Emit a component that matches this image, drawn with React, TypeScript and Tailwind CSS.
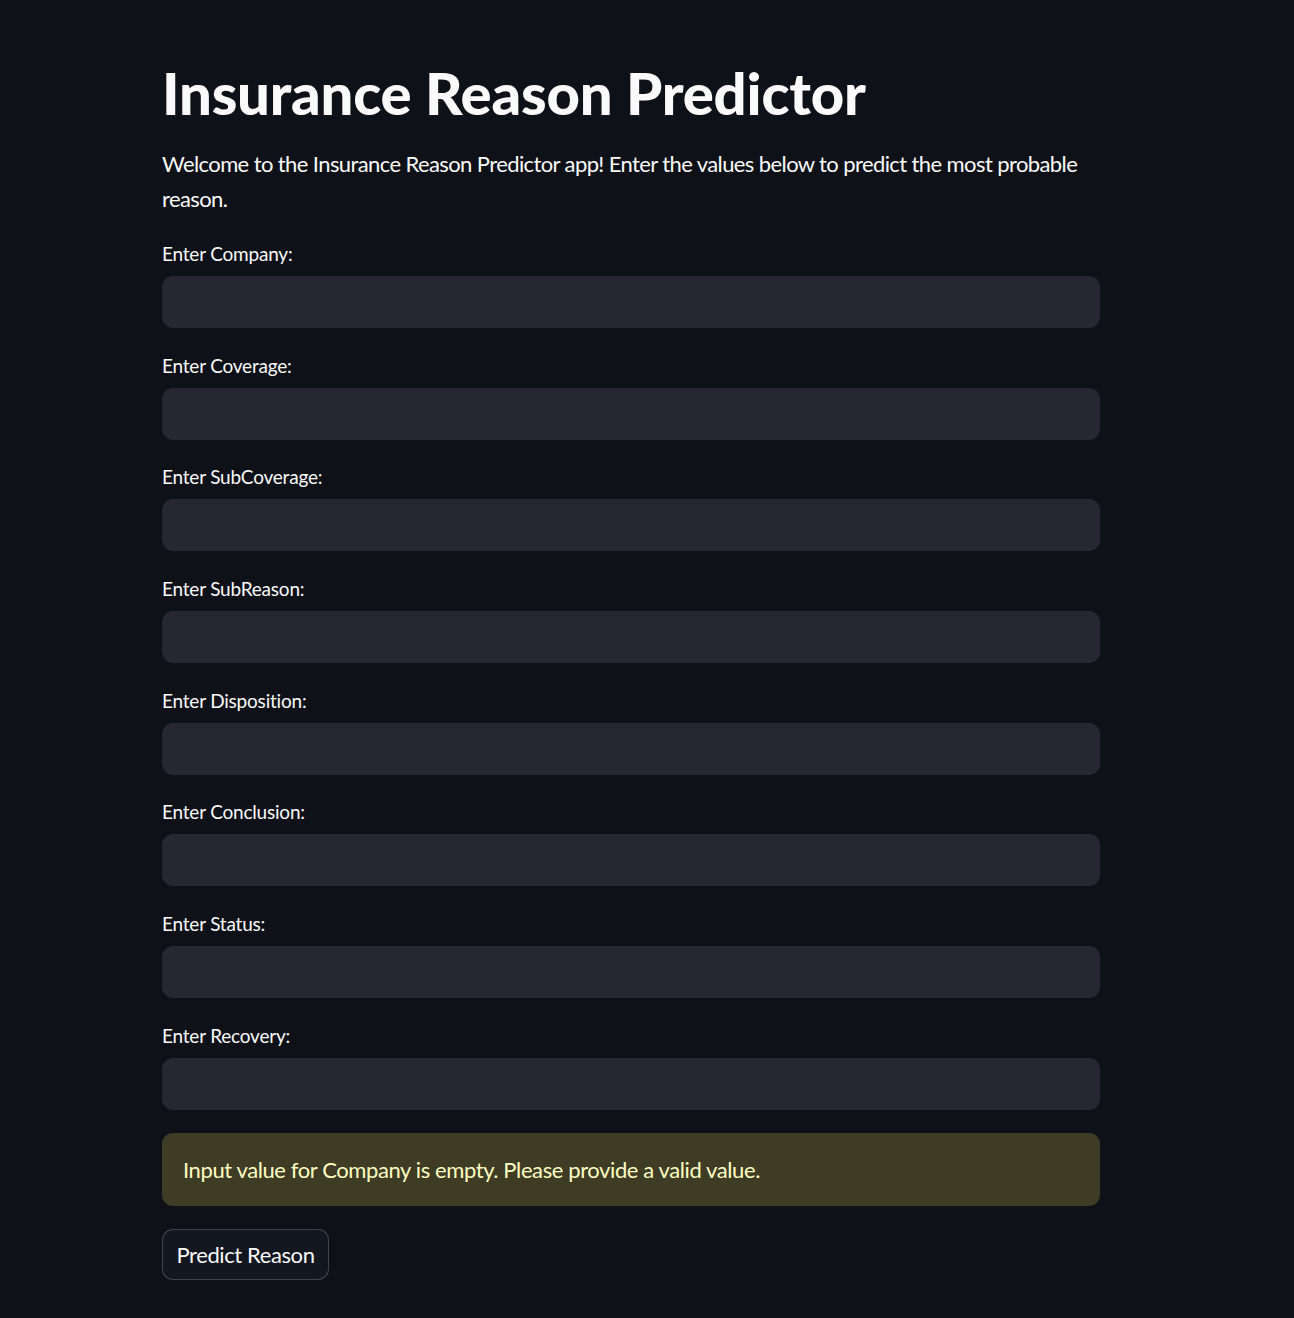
import React from "react";

const fields = [
  "Enter Company:",
  "Enter Coverage:",
  "Enter SubCoverage:",
  "Enter SubReason:",
  "Enter Disposition:",
  "Enter Conclusion:",
  "Enter Status:",
  "Enter Recovery:",
];

export default function App() {
  return (
    <div
      className="min-h-[1318px] w-full bg-[#0e1117] text-[#fafafa]"
      style={{ fontFamily: "Lato, 'Noto Sans', sans-serif" }}
    >
      <div className="ml-[162px] w-[938px] pt-[57px]">
        <h1 className="text-[58px] font-black leading-[72px] tracking-[-0.2px]">
          Insurance Reason Predictor
        </h1>
        <p className="mt-[17px] text-[22px] leading-[35px] tracking-[-0.6px]">
          Welcome to the Insurance Reason Predictor app! Enter the values below to predict the most probable
          <br />
          reason.
        </p>
        <div className="mt-[25px] flex flex-col gap-[24.7px]">
          {fields.map((f) => (
            <div key={f} className="flex flex-col">
              <label className="text-[19px] leading-[26px] tracking-[-0.2px]">{f}</label>
              <div className="mt-[9px] h-[52px] rounded-[11px] bg-[#262730]" />
            </div>
          ))}
        </div>
        <div className="mt-[23px] flex h-[73px] items-center rounded-[11px] bg-[#3e3c24] px-[21px] text-[22px] tracking-[-0.4px] text-[#ffffc2]">
          Input value for Company is empty. Please provide a valid value.
        </div>
        <button className="mt-[23px] h-[51px] w-[167px] rounded-[11px] border border-[#fafafa33] bg-[#131720] text-[22px] tracking-[-0.4px] text-[#fafafa]">
          Predict Reason
        </button>
      </div>
    </div>
  );
}
